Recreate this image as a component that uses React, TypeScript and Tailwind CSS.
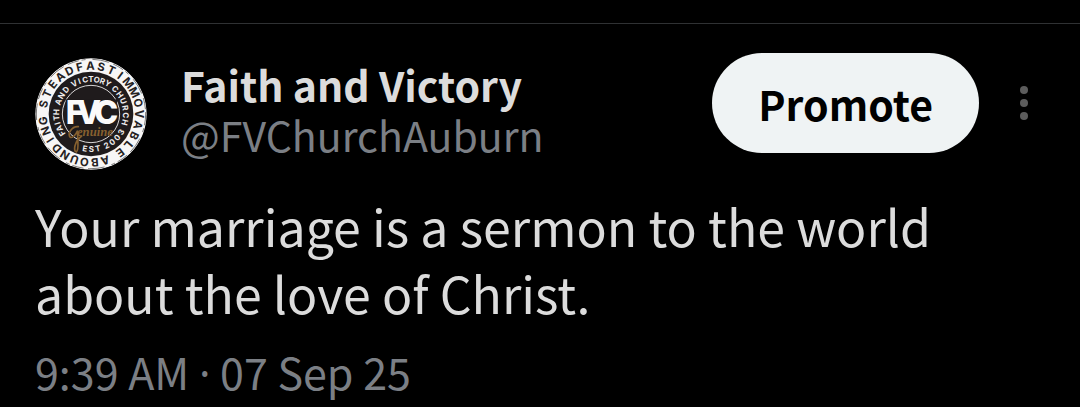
import React from 'react';

interface Post {
  name: string;
  handle: string;
  text: string;
  time: string;
  date: string;
}

interface ArcWord {
  text: string;
  from: number;
  to: number;
  flip?: boolean;
}

const post: Post = {
  name: 'Faith and Victory',
  handle: '@FVChurchAuburn',
  text: 'Your marriage is a sermon to the world about the love of Christ.',
  time: '9:39 AM',
  date: '07 Sep 25',
};

// Angles are those of the first and last letter, clockwise from the top
const outerWords: ArcWord[] = [
  { text: 'STEADFAST', from: -78, to: 25 },
  { text: 'IMMOVABLE', from: 37, to: 143 },
  { text: 'ABOUNDING', from: 163, to: 262 },
];

const innerWords: ArcWord[] = [
  { text: 'FAITH', from: -124, to: -87 },
  { text: 'AND', from: -70, to: -46 },
  { text: 'VICTORY', from: -29, to: 29 },
  { text: 'CHURCH', from: 44, to: 104 },
  { text: 'EST', from: 190, to: 169, flip: true },
  { text: '2003', from: 154, to: 121, flip: true },
];

const arcLetters = (words: ArcWord[], radius: number, flipRadius: number) =>
  words.map((word) =>
    word.text.split('').map((letter, i) => {
      const angle = word.from + ((word.to - word.from) * i) / (word.text.length - 1);
      return (
        <text
          key={`${word.text}-${i}`}
          y={word.flip ? flipRadius : -radius}
          textAnchor="middle"
          transform={`rotate(${word.flip ? angle - 180 : angle})`}
        >
          {letter}
        </text>
      );
    })
  );

const ChurchLogo: React.FC = () => (
  <svg viewBox="-168 -168 336 336" className="size-28 shrink-0 rounded-full" role="img" aria-label="Faith and Victory Church">
    <circle r="167" fill="#f7f6f6" />
    <circle r="164" fill="none" stroke="#3a3838" strokeWidth="2" strokeDasharray="34 9 12 21 50 14" />
    <circle r="127" fill="#1f1b1c" />
    <circle r="86" fill="none" stroke="#d8d6d6" strokeWidth="3" />
    <g fill="#242122" fontFamily="Inter, sans-serif" fontWeight="700" fontSize="34">
      {arcLetters(outerWords, 133, 157)}
    </g>
    <g fill="#efeded" fontFamily="Inter, sans-serif" fontWeight="700" fontSize="24">
      {arcLetters(innerWords, 96, 114)}
    </g>
    {/* The monogram breaks through the inner ring */}
    <rect x="-76" y="-44" width="154" height="76" fill="#1f1b1c" />
    <text
      x="-76 -44 10"
      y="31"
      fill="#fbfafa"
      fontFamily="Inter, sans-serif"
      fontWeight="800"
      fontSize="97"
    >
      FVC
    </text>
    <path
      d="M-38 38 C-58 36 -72 60 -62 70 C-52 74 -44 58 -40 50 C-42 74 -34 108 -44 114 C-54 112 -50 82 -28 66"
      fill="none"
      stroke="#86602f"
      strokeWidth="5"
      strokeLinecap="round"
    />
    <text x="-42" y="67" fill="#86602f" fontFamily="Liberation Serif, serif" fontStyle="italic" fontWeight="700" fontSize="38">
      enuine
    </text>
  </svg>
);

const DotsIcon: React.FC = () => (
  <svg viewBox="0 0 10 34" className="h-[34px] w-[10px]" fill="#5c5c5c" aria-hidden="true">
    <circle cx="5" cy="4" r="4" />
    <circle cx="5" cy="17" r="4" />
    <circle cx="5" cy="30" r="4" />
  </svg>
);

const App: React.FC = () => {
  return (
    <main className="min-h-screen bg-black pt-[23px] font-['Noto_Sans_CJK_SC','Noto_Sans',sans-serif]">
      <article className="border-t border-[#2f3133] px-[35px] pt-[29px]">
        <header className="flex items-start pr-4">
          <div className="flex min-w-0 flex-1 items-start gap-[34px] pt-[5px]">
            <ChurchLogo />
            <div className="min-w-0 pt-px text-[41px] leading-[50px] whitespace-nowrap">
              <h1 className="font-bold text-[#dcdcdc]">{post.name}</h1>
              <a href="#profile" className="block text-[#7b7f85]">
                {post.handle}
              </a>
            </div>
          </div>
          <div className="flex shrink-0 items-center gap-10">
            <button
              type="button"
              className="rounded-full bg-[#eff3f4] px-[46px] py-[25px] text-[41px] leading-[50px] font-bold text-black"
            >
              Promote
            </button>
            <button type="button" aria-label="More options">
              <DotsIcon />
            </button>
          </div>
        </header>

        <p className="mt-[22px] text-[50px] leading-[67px] text-[#dcdcdc]">{post.text}</p>
        <p className="mt-5 text-[43px] leading-[50px] text-[#7b7f85]">
          {post.time} <span className="font-['Noto_Sans',sans-serif]">·</span> {post.date}
        </p>
      </article>
    </main>
  );
};

export default App;
